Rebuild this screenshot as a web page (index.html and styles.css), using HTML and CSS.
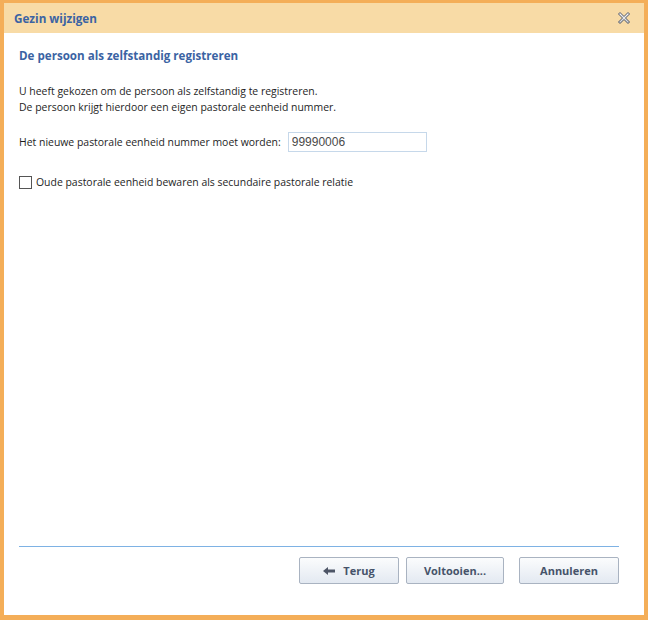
FILE: index.html
```html
<!DOCTYPE html>
<html lang="nl">
<head>
  <meta charset="UTF-8" />
  <title>Gezin wijzigen</title>
  <link rel="stylesheet" href="styles.css">
</head>
<body>
<div class="dialog">
  <div class="titlebar">
    <span class="title">Gezin wijzigen</span>
    <button class="close" title="Sluiten">
      <svg width="14" height="14" viewBox="0 0 14 14">
        <defs>
          <linearGradient id="xg" x1="0" y1="0" x2="0" y2="1">
            <stop offset="0" stop-color="#ffffff"/>
            <stop offset="1" stop-color="#c9ced6"/>
          </linearGradient>
        </defs>
        <path d="M1.5 3 L3 1.5 L7 5.5 L11 1.5 L12.5 3 L8.5 7 L12.5 11 L11 12.5 L7 8.5 L3 12.5 L1.5 11 L5.5 7 Z" fill="url(#xg)" stroke="#4b5263" stroke-width="1" stroke-linejoin="round"/>
      </svg>
    </button>
  </div>
  <div class="content">
    <h2 class="heading">De persoon als zelfstandig registreren</h2>
    <p class="intro">U heeft gekozen om de persoon als zelfstandig te registreren.<br>De persoon krijgt hierdoor een eigen pastorale eenheid nummer.</p>
    <div class="field">
      <label class="field-label" for="nr">Het nieuwe pastorale eenheid nummer moet worden:</label>
      <input class="field-input" id="nr" type="text" value="99990006">
    </div>
    <label class="check">
      <span class="check-box"></span>
      Oude pastorale eenheid bewaren als secundaire pastorale relatie
    </label>
  </div>
  <div class="footer">
    <button class="btn">
      <svg width="12" height="8" viewBox="0 0 12 8"><path d="M0 4 L5 0 L5 2.5 L12 2.5 L12 5.5 L5 5.5 L5 8 Z" fill="#4d5566"/></svg>
      Terug
    </button>
    <button class="btn btn-finish">Voltooien...</button>
    <button class="btn btn-cancel">Annuleren</button>
  </div>
</div>
</body>
</html>
```

FILE: styles.css
```css
body {
  margin: 0;
  font-family: "Open Sans", "DejaVu Sans", sans-serif;
  color: #1e1e1e;
}
.dialog {
  width: 648px;
  height: 620px;
  box-sizing: border-box;
  border-style: solid;
  border-color: #f4ae58;
  border-width: 3px 4px 5px 4px;
  background: #fff;
  display: flex;
  flex-direction: column;
}
.titlebar {
  height: 30px;
  background: #f8dba6;
  display: flex;
  align-items: center;
  justify-content: space-between;
  padding: 0 12px 0 10px;
}
.title {
  font-weight: 700;
  font-size: 11.7px;
  color: #3b63a3;
}
.close {
  border: none;
  background: none;
  padding: 0;
  width: 16px;
  height: 16px;
  display: flex;
  align-items: center;
  justify-content: center;
}
.content {
  flex: 1;
  padding: 12px 15px 0;
}
.heading {
  margin: 0;
  font-size: 11.6px;
  font-weight: 700;
  color: #3b63a3;
  line-height: 22px;
}
.intro {
  margin: 16px 0 0;
  font-size: 10.45px;
  line-height: 16px;
}
.field {
  display: flex;
  align-items: center;
  gap: 7px;
  margin-top: 17px;
  font-size: 10.45px;
}
.field-input {
  width: 139px;
  height: 20px;
  box-sizing: border-box;
  border: 1px solid #c6d8ea;
  padding: 0 3px;
  font-family: "Liberation Sans", Arial, sans-serif;
  font-size: 12px;
  color: #4a4a4a;
}
.check {
  display: flex;
  align-items: center;
  gap: 4px;
  margin-top: 23px;
  font-size: 10.45px;
}
.check-box {
  width: 11px;
  height: 11px;
  border: 1px solid #555;
  background: #fff;
}
.footer {
  margin: 0 25px 0 15px;
  border-top: 1px solid #7eb2e4;
  padding: 10px 0 31px;
  display: flex;
  justify-content: flex-end;
  gap: 7px;
}
.btn {
  width: 100px;
  height: 27px;
  border: 1px solid #a9b3c1;
  border-radius: 2px;
  background: linear-gradient(#fbfcfd, #e3e9f1);
  font-family: "Open Sans", "DejaVu Sans", sans-serif;
  font-size: 11px;
  font-weight: 700;
  color: #46536a;
  display: flex;
  align-items: center;
  justify-content: center;
  gap: 8px;
  padding: 0;
}
.btn-finish {
  width: 98px;
}
.btn-cancel {
  margin-left: 8px;
}
```
